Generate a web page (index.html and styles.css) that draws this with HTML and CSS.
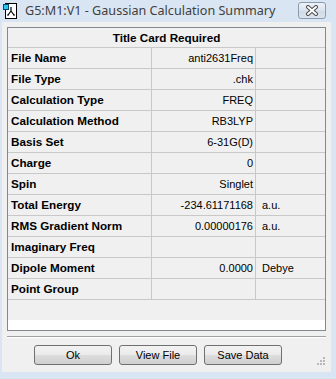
FILE: index.html
```html
<!DOCTYPE html>
<html lang="en">
<head>
    <meta charset="UTF-8">
    <title>G5:M1:V1 - Gaussian Calculation Summary</title>
    <link rel="stylesheet" href="styles.css">
</head>
<body>
    <div class="window">
        <div class="titlebar">
            <svg class="appicon" width="16" height="17" viewBox="0 0 16 17">
                <rect x="2.5" y="0.5" width="11" height="15" fill="#fff" stroke="#000"/>
                <path d="M8 4 L8 8 M8 8 L5 12 M8 8 L11 12 M4 12 L6 12 M10 12 L12 12" stroke="#000" stroke-width="1.2" fill="none"/>
                <rect x="0.5" y="1.5" width="5" height="5" fill="#27c8f0" stroke="#0a4a70"/>
            </svg>
            <span class="title">G5:M1:V1 - Gaussian Calculation Summary</span>
            <div class="closebtn">
                <svg width="14" height="11" viewBox="0 0 14 11">
                    <path d="M3 2 L11 9 M11 2 L3 9" stroke="#4a4a4a" stroke-width="4" stroke-linecap="round"/>
                    <path d="M3 2 L11 9 M11 2 L3 9" stroke="#fff" stroke-width="2" stroke-linecap="round"/>
                </svg>
            </div>
        </div>
        <div class="client">
            <div class="summary">
                <div class="headrow">Title Card Required</div>
                <div class="row"><div class="label">File Name</div><div class="value">anti2631Freq</div><div class="unit"></div></div>
                <div class="row"><div class="label">File Type</div><div class="value">.chk</div><div class="unit"></div></div>
                <div class="row"><div class="label">Calculation Type</div><div class="value">FREQ</div><div class="unit"></div></div>
                <div class="row"><div class="label">Calculation Method</div><div class="value">RB3LYP</div><div class="unit"></div></div>
                <div class="row"><div class="label">Basis Set</div><div class="value">6-31G(D)</div><div class="unit"></div></div>
                <div class="row"><div class="label">Charge</div><div class="value">0</div><div class="unit"></div></div>
                <div class="row"><div class="label">Spin</div><div class="value">Singlet</div><div class="unit"></div></div>
                <div class="row"><div class="label">Total Energy</div><div class="value">-234.61171168</div><div class="unit">a.u.</div></div>
                <div class="row"><div class="label">RMS Gradient Norm</div><div class="value">0.00000176</div><div class="unit">a.u.</div></div>
                <div class="row"><div class="label">Imaginary Freq</div><div class="value"></div><div class="unit"></div></div>
                <div class="row"><div class="label">Dipole Moment</div><div class="value">0.0000</div><div class="unit">Debye</div></div>
                <div class="row"><div class="label">Point Group</div><div class="value"></div><div class="unit"></div></div>
                <div class="filler"></div>
                <div class="whitestrip"></div>
            </div>
            <div class="separator"></div>
            <div class="buttons">
                <button class="btn">Ok</button>
                <button class="btn">View File</button>
                <button class="btn">Save Data</button>
            </div>
            <svg class="grip" width="9" height="9" viewBox="0 0 9 9">
                <rect x="7" y="0" width="2" height="2" fill="#b8b8b8"/>
                <rect x="4" y="3" width="2" height="2" fill="#b8b8b8"/>
                <rect x="7" y="3" width="2" height="2" fill="#b8b8b8"/>
                <rect x="1" y="6" width="2" height="2" fill="#b8b8b8"/>
                <rect x="4" y="6" width="2" height="2" fill="#b8b8b8"/>
                <rect x="7" y="6" width="2" height="2" fill="#b8b8b8"/>
            </svg>
        </div>
    </div>
</body>
</html>
```

FILE: styles.css
```css
/* window frame */
body, html {
    margin: 0;
    padding: 0;
    background: #d9e5f3;
    font-family: 'Liberation Sans', Arial, sans-serif;
}

.window {
    width: 336px;
    height: 379px;
    display: flex;
    flex-direction: column;
}

.titlebar {
    height: 22px;
    display: flex;
    align-items: flex-start;
    position: relative;
}

.appicon {
    margin: 3px 0 0 3px;
}

.title {
    margin: 3px 0 0 6px;
    font-family: 'Noto Sans', sans-serif;
    font-size: 12.6px;
    line-height: 15px;
    color: #404040;
}

.closebtn {
    position: absolute;
    left: 298px;
    top: 2px;
    width: 26px;
    height: 15px;
    border: 1px solid #8c9aab;
    border-radius: 3px;
    background: linear-gradient(#eef3f9, #dbe3ee 50%, #d0dae7 51%, #dbe4ef);
    display: flex;
    align-items: center;
    justify-content: center;
}

.client {
    margin: 0 5px 7px 2px;
    flex: 1;
    background: #f0f0f0;
    padding: 5px 5px 0 5px;
    position: relative;
}

/* summary grid */
.summary {
    border: 1px solid #828790;
    background: #f0f0f0;
    font-size: 11px;
    color: #000;
}

.headrow {
    height: 19px;
    line-height: 19px;
    border-bottom: 1px solid #c8c8c8;
    text-align: center;
    font-weight: bold;
    font-size: 11.7px;
}

.row {
    display: flex;
    height: 20px;
    line-height: 20px;
    border-bottom: 1px solid #c8c8c8;
}

.label {
    width: 140px;
    padding-left: 3px;
    border-right: 1px solid #c8c8c8;
    font-weight: bold;
    font-size: 11.7px;
    white-space: nowrap;
}

.value {
    width: 101px;
    padding-right: 2px;
    border-right: 1px solid #c8c8c8;
    text-align: right;
    white-space: nowrap;
}

.unit {
    flex: 1;
    padding-left: 6px;
}

.filler {
    height: 20px;
}

.whitestrip {
    height: 10px;
    background: #fff;
}

.separator {
    margin-top: 5px;
    border-top: 1px solid #a0a0a0;
    border-bottom: 1px solid #fff;
}

.buttons {
    display: flex;
    gap: 7px;
    margin: 7px 0 0 27px;
}

.btn {
    width: 78px;
    height: 20px;
    padding: 0;
    border: 1px solid #707070;
    border-radius: 3px;
    background: linear-gradient(#f2f2f2, #ebebeb 50%, #dddddd 51%, #cfcfcf);
    font-family: 'Liberation Sans', Arial, sans-serif;
    font-size: 11px;
    color: #000;
}

.grip {
    position: absolute;
    right: 6px;
    bottom: 6px;
}
```
